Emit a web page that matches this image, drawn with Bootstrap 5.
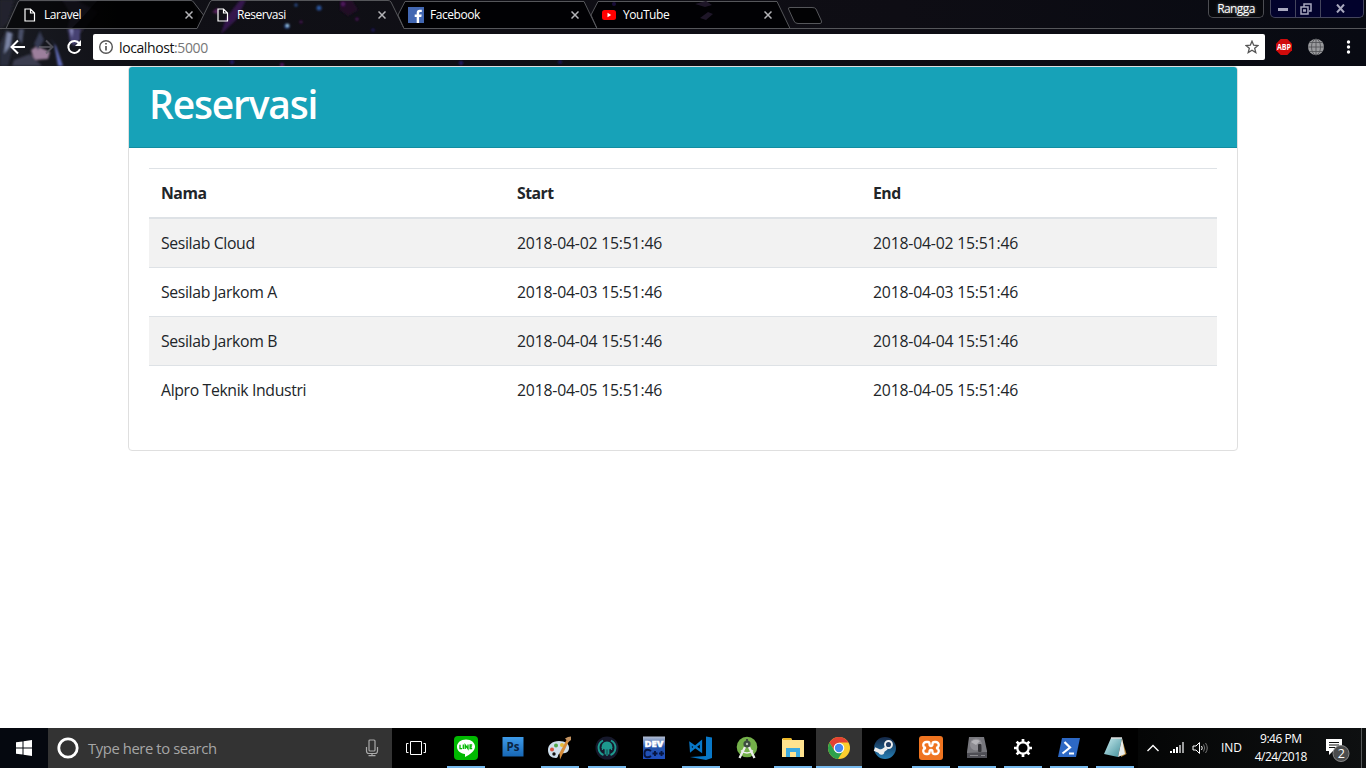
<!DOCTYPE html>
<html lang="id">
<head>
<meta charset="utf-8">
<meta name="viewport" content="width=device-width, initial-scale=1">
<title>Reservasi</title>
<link href="https://cdn.jsdelivr.net/npm/bootstrap@5.3.0/dist/css/bootstrap.min.css" rel="stylesheet">
<style>
  body { font-family: "Open Sans", "Noto Sans", sans-serif; color: #212529; background: #fff; }
  svg { display: block; flex: none; }
  .screen { width: 1366px; height: 768px; }

  /* browser frame */
  .frame { height: 66px; color: #fff; background: linear-gradient(90deg, #191b22 0, #101016 130px, #0e0d14 900px, #080a12 1366px); }
  .tabstrip { height: 29px; }
  .theme-art { left: 0; top: 0; }
  .tab-lines { left: 0; top: 0; z-index: 0; }
  .tab-item { width: 193px; padding-left: 22px; font-size: 12px; line-height: 29px; z-index: 1; letter-spacing: -.45px; }
  .tab-icon { width: 16px; margin-right: 6px; }
  .user-pill { width: 56px; height: 18px; border: 1px solid #4c4d52; border-top: 0; border-radius: 0 0 5px 5px; font-size: 12px; line-height: 18px; text-shadow: 0 0 3px #fff8; background: #07080c; letter-spacing: -.6px; }
  .win-group { width: 94px; height: 18px; margin-left: 6px; margin-right: 2px; background: #02022c; border: 1px solid #44455c; border-top: 0; border-radius: 0 0 5px 5px; }
  .win-group > div + div { border-left: 1px solid #44455c; }
  .win-min { width: 24px; }
  .win-max { width: 25px; }
  .toolbar { height: 37px; }
  .omnibox { width: 1172px; height: 26px; background: #fff; border-radius: 2px; color: #111; font-size: 14px; margin-top: 5px; letter-spacing: -.4px; }
  .port { color: #777; }
  .bookmark { margin-right: 6px; }

  /* page */
  .page { height: 662px; }
  .booking { width: 1110px; border-color: #dfdfdf; border-radius: 4px; }
  .booking-head { height: 81px; padding: 11px 20px; background: #17a2b8; border-bottom: 1px solid #138da1; border-radius: 3px 3px 0 0; }
  .booking-head h1 { font-size: 39px; font-weight: 600; line-height: 52px; color: #fff; letter-spacing: -1.2px; }
  .booking-body { padding: 20px; }
  .booking-table { font-size: 15.8px; line-height: 24px; letter-spacing: -.21px; border-collapse: separate; border-spacing: 0; table-layout: fixed; --bs-table-striped-bg: #f2f2f2; }
  .booking-table > :not(caption) > * > * { padding: 12px; border: 0 solid #dee2e6; border-top-width: 1px; }
  .booking-table > thead > tr > th { border-bottom-width: 2px; font-weight: 700; letter-spacing: -.5px; }
  .booking-table > tbody > tr:first-child > td { border-top-width: 0; }
  .booking-table > tbody > tr > td:first-child { letter-spacing: -.36px; }

  /* taskbar */
  .taskbar { height: 40px; background: #000; color: #fff; }
  .start { width: 48px; background: #05080f; }
  .search { width: 344px; background: #333; color: #a6a6a6; font-size: 14.8px; letter-spacing: -.4px; padding-left: 9px; padding-right: 12px; }
  .search-hint { margin-left: 9px; padding-top: 1px; }
  .task-view { width: 48px; }
  .apps { margin-left: 2px; }
  .app { width: 46px; height: 40px; }
  .app.wide { width: 47px; }
  .app.running { background: linear-gradient(#76b9ed, #76b9ed) 50% 100% / 38px 2px no-repeat; }
  .app.current { background: linear-gradient(#76b9ed, #76b9ed) 0 100% / 46px 2px no-repeat, #333; }
  .tray { background: linear-gradient(90deg, #050606, #0e1011); font-size: 12px; letter-spacing: -.5px; padding-left: 9px; }
  .signal { margin-left: 11px; }
  .volume { margin-left: 8px; }
  .lang { margin-left: 12px; letter-spacing: -.1px; }
  .clock { width: 66px; line-height: 18px; margin-left: 6px; }
  .notes { margin-left: 11px; }
  .peek { width: 1px; height: 40px; background: #55585a; margin-right: 4px; }
</style>
</head>
<body>
<div class="screen d-flex flex-column overflow-hidden">

  <header class="frame position-relative">
    <svg class="theme-art position-absolute" width="1366" height="66">
      <defs><filter id="soft" x="-30%" y="-30%" width="160%" height="160%"><feGaussianBlur stdDeviation="1.300"/></filter></defs>
      <g filter="url(#soft)">
        <path d="M0 0H14L8 22 0 30Z" fill="#20232d"/>
        <path d="M62 0L76 0 98 12 80 34 74 42 67 30 71 14Z" fill="#2a2638"/>
        <path d="M6 30L14 34 12 50 8 66H0V44Z" fill="#2c2f3e"/>
        <path d="M7 32L12 33 10 46 4 54Z" fill="#7a84a4"/>
        <path d="M19 29L24 29 22 44 18 38Z" fill="#4a5068"/>
        <path d="M31 50L37 46 50 52 48 59 34 60Z" fill="#9c7f9c"/>
        <path d="M34 44L40 31 44 40 38 50Z" fill="#353a52"/>
        <path d="M50 38L54 43 58 66H63L56 46Z" fill="#5e69b4"/>
        <path d="M68 29L80 29 80 40 74 46 70 42Z" fill="#474273"/>
        <path d="M70 29L73 29 72 38Z" fill="#9290c4"/>
        <path d="M14 60L30 54 42 66H12Z" fill="#3b3c50"/>
        <path d="M221 34L226 18 240 0H246L236 20Z" fill="#35184e"/>
        <path d="M212 12L218 8 218 14Z" fill="#5a2060"/>
        <path d="M340 0H352L358 10 348 16 340 10Z" fill="#231028"/>
        <g fill="#2c56a0"><circle cx="287" cy="26" r="2.600"/><circle cx="319" cy="8" r="2.500"/><circle cx="296" cy="5" r="1.500"/></g>
        <circle cx="287.500" cy="25.500" r="1.400" fill="#b2e0f4"/>
        <g fill="#571566"><circle cx="343" cy="4" r="2"/><circle cx="301" cy="22" r="1.300"/><circle cx="357" cy="19" r="1.500"/><circle cx="282" cy="65" r="2"/></g>
        <g fill="#241e6e"><circle cx="373" cy="30" r="1.500"/><circle cx="232" cy="62" r="2"/><circle cx="461" cy="63" r="2"/><circle cx="560" cy="62" r="1.700"/></g>
      </g>
    </svg>
    <svg class="tab-lines position-absolute" width="1366" height="30" fill="none" stroke="#55565a">
      <path d="M7 28.500L19 1.500H192L198 15 197 28.500Z" fill="#000" fill-opacity=".6" stroke="none"/>
      <path d="M97 1H192L203 15 197 28H72L80 20Z" fill="#000" fill-opacity=".7" stroke="none"/>
      <path d="M405 1.500H584L597 28.500H404L398 15ZM598 1.500H777L790 28.500H597L591 15Z" fill="#010104"/>
      <path d="M0 28.500H6L18 2Q19 .5 20 .5H191Q192.500 .5 193.500 2L203.500 15M6 28.500H197L210 2Q211 .5 212 .5H388Q390 .5 391 2L404 28.500H597M790 28.500H1366"/>
      <path d="M790 7.500H812Q815 7.500 816 9L821.500 21Q822 23.500 820 23.500H798Q795 23.500 794 21L788.500 9Q788 7.500 790 7.500Z" fill="#020204"/>
      <g stroke="none"><circle cx="614" cy="4" r="2" fill="#180c38"/><path d="M695 4L706 1 712 5 705 7ZM700 18L708 12 713 14 706 20Z" fill="#1e1628"/></g>
    </svg>
    <div class="tabstrip d-flex position-relative">
      <div class="tab-item d-flex align-items-center"><span class="tab-icon d-flex justify-content-center"><svg width="12" height="14" fill="none" stroke="#fff" stroke-width="1.200"><path d="M1 1H6.500L10.500 5V13H1ZM6.500 1V5H10.500"/></svg></span>Laravel<svg class="ms-auto" width="8" height="8" stroke="#b4b4b8" stroke-width="1.500"><path d="M.5 .5L7.500 7.500M7.500 .5L.5 7.500"/></svg></div>
      <div class="tab-item d-flex align-items-center"><span class="tab-icon d-flex justify-content-center"><svg width="12" height="14" fill="none" stroke="#fff" stroke-width="1.200"><path d="M1 1H6.500L10.500 5V13H1ZM6.500 1V5H10.500"/></svg></span>Reservasi<svg class="ms-auto" width="8" height="8" stroke="#b4b4b8" stroke-width="1.500"><path d="M.5 .5L7.500 7.500M7.500 .5L.5 7.500"/></svg></div>
      <div class="tab-item d-flex align-items-center"><span class="tab-icon"><svg width="16" height="16"><path d="M0 0H16V16H0Z" fill="#4267b2"/><path d="M8.700 16V10H6.700V7.500H8.700V5.700Q8.700 2.700 11.700 2.700H13.800V5H12.300Q11.100 5 11.100 6.200V7.500H13.700L13.300 10H11.100V16Z" fill="#fff"/></svg></span>Facebook<svg class="ms-auto" width="8" height="8" stroke="#b4b4b8" stroke-width="1.500"><path d="M.5 .5L7.500 7.500M7.500 .5L.5 7.500"/></svg></div>
      <div class="tab-item d-flex align-items-center"><span class="tab-icon"><svg width="16" height="12"><rect x="1" y="1" width="14" height="10" rx="2.500" fill="#f00"/><path d="M6.500 3.800L10.200 6 6.500 8.200Z" fill="#fff"/></svg></span>YouTube<svg class="ms-auto" width="8" height="8" stroke="#b4b4b8" stroke-width="1.500"><path d="M.5 .5L7.500 7.500M7.500 .5L.5 7.500"/></svg></div>
      <div class="user-pill ms-auto text-center">Rangga</div>
      <div class="win-group d-flex">
        <div class="win-min d-flex align-items-center justify-content-center"><svg width="10" height="4"><path d="M0 1H10V4H0Z" fill="#a8a8be"/></svg></div>
        <div class="win-max d-flex align-items-center justify-content-center pe-1"><svg width="12" height="12" fill="none" stroke="#a8a8be" stroke-width="1.500"><path d="M4 3.500V1H11V8H9M1 4H8V11H1ZM3.800 7H5.200V8H3.800Z"/></svg></div>
        <div class="d-flex align-items-center justify-content-center flex-fill pe-1"><svg width="9" height="9" stroke="#a8a8be" stroke-width="2"><path d="M1 .5L8 8.500M8 .5L1 8.500"/></svg></div>
      </div>
    </div>

    <div class="toolbar d-flex position-relative">
      <svg width="93" height="37" fill="none" stroke="#fff" stroke-width="2">
        <path d="M25 18H12M18 11.500L11.500 18 18 24.500"/>
        <path d="M39 18H52M46 11.500L52.500 18 46 24.500" stroke="#62626b" opacity=".7"/>
        <path d="M79.300 14.500A6 6 0 1 0 80 20"/><path d="M75 17H81V11Z" fill="#fff" stroke="none"/>
      </svg>
      <div class="omnibox d-flex align-items-center">
        <svg class="ms-1" width="18" height="18" fill="none" stroke="#555" stroke-width="1.400"><circle cx="9" cy="9" r="6.300"/><path d="M9 8V12.500M9 5V6.600" stroke-width="1.700"/></svg>
        <span class="ms-1">localhost<span class="port">:5000</span></span>
        <svg class="bookmark ms-auto" width="14" height="14" fill="none" stroke="#555" stroke-width="1.300"><path d="M7 1.200L8.700 5.200 13 5.500 9.700 8.300 10.800 12.600 7 10.300 3.200 12.600 4.300 8.300 1 5.500 5.300 5.200Z"/></svg>
      </div>
      <svg width="101" height="37">
        <path d="M15.700 10H22.300L27 14.700V21.300L22.300 26H15.700L11 21.300V14.700Z" fill="#d00b0b"/>
        <text x="12" y="20.900" font-size="8" font-weight="700" fill="#fff" textLength="14" lengthAdjust="spacingAndGlyphs">ABP</text>
        <circle cx="51" cy="18" r="8" fill="#9a9b9e"/>
        <g fill="none" stroke="#55565a" stroke-width=".9"><path d="M51 10V26M43 18H59M45 13.500H57M45 22.500H57"/><ellipse cx="51" cy="18" rx="4.500" ry="8"/></g>
        <g fill="#fff"><circle cx="83.500" cy="13" r="1.700"/><circle cx="83.500" cy="18" r="1.700"/><circle cx="83.500" cy="23" r="1.700"/></g>
      </svg>
    </div>
  </header>

  <main class="page d-flex justify-content-center align-items-start">
    <div class="card booking">
      <div class="booking-head"><h1 class="mb-0">Reservasi</h1></div>
      <div class="card-body booking-body">
        <table class="table table-striped booking-table mb-3">
          <thead><tr><th>Nama</th><th>Start</th><th>End</th></tr></thead>
          <tbody>
            <tr><td>Sesilab Cloud</td><td>2018-04-02 15:51:46</td><td>2018-04-02 15:51:46</td></tr>
            <tr><td>Sesilab Jarkom A</td><td>2018-04-03 15:51:46</td><td>2018-04-03 15:51:46</td></tr>
            <tr><td>Sesilab Jarkom B</td><td>2018-04-04 15:51:46</td><td>2018-04-04 15:51:46</td></tr>
            <tr><td>Alpro Teknik Industri</td><td>2018-04-05 15:51:46</td><td>2018-04-05 15:51:46</td></tr>
          </tbody>
        </table>
      </div>
    </div>
  </main>

  <footer class="taskbar d-flex">
    <div class="start d-flex align-items-center justify-content-center"><svg width="16" height="16" fill="#fff"><path d="M0 2.300L6.500 1.400V7.500H0ZM7.500 1.200L16 0V7.500H7.500ZM0 8.500H6.500V14.600L0 13.700ZM7.500 8.500H16V16L7.500 14.800Z"/></svg></div>
    <div class="search d-flex align-items-center">
      <svg width="22" height="22" fill="none" stroke="#fff"><circle cx="11" cy="11" r="9.200" stroke-width="2.800"/></svg>
      <span class="search-hint">Type here to search</span>
      <svg class="ms-auto" width="16" height="18" fill="none" stroke="#aaa" stroke-width="1.200"><rect x="5" y="1" width="6" height="11" rx="1"/><path d="M2.500 8V12Q2.500 14.500 5 14.500H11Q13.500 14.500 13.500 12V8M8 14.500V17M4.500 16.700H11.500"/></svg>
    </div>
    <div class="task-view d-flex align-items-center justify-content-center"><svg width="22" height="16" fill="none" stroke="#fff"><path d="M5.500 1.500H16.500V14.500H5.500ZM3.500 3.500H1.500V12.500H3.500M18.500 3.500H20.500V12.500H18.500"/></svg></div>

    <div class="apps d-flex">
      <div class="app wide running d-flex align-items-center justify-content-center"><svg width="24" height="24"><rect width="24" height="24" rx="4" fill="#00b900"/><path d="M12 3.500C6.800 3.500 3 6.700 3 10.800S6.500 17.400 11 18V21C16 18.500 21 15 21 10.800S17.200 3.500 12 3.500Z" fill="#fff"/><g stroke="#00b900" stroke-width="1.300" fill="none"><path d="M6 8.700V12.700H8M9.300 8.500V13M11.200 13V9L14 12.700V8.500M18.200 9H16.100V12.700H18.200M16.100 10.800H18"/></g></svg></div>
      <div class="app wide d-flex align-items-center justify-content-center"><svg width="22" height="22"><defs><linearGradient id="ps" x2="0" y2="1"><stop stop-color="#3e9be9"/><stop offset="1" stop-color="#1767b5"/></linearGradient></defs><path d="M.5 0H21.500V19.500H.5Z" fill="url(#ps)"/><text x="4.500" y="14" font-size="12" font-weight="700" fill="#0b2443" textLength="13" lengthAdjust="spacingAndGlyphs">Ps</text></svg></div>
      <div class="app wide running d-flex align-items-center justify-content-center"><svg width="25" height="24"><path d="M12 5C5 5 1 9 1 14S4 22 9 22C12 22 10 18 13 17.500S21 18 22 13 18 5 12 5Z" fill="#cfdfec"/><circle cx="5" cy="13.500" r="2" fill="#d9523c"/><circle cx="9" cy="9.500" r="2" fill="#52a94a"/><circle cx="15" cy="9" r="2" fill="#e4bc38"/><circle cx="7" cy="18" r="1.700" fill="#111"/><path d="M22 5L13 23.500 12.500 17 19.500 4Z" fill="#d48b3a"/><path d="M18 2.500L21 1 24 .5 24 4 21.500 6Z" fill="#c59461"/></svg></div>
      <div class="app wide running d-flex align-items-center justify-content-center"><svg width="24" height="24"><circle cx="12" cy="12" r="11.500" fill="#16182b"/><g fill="none" stroke="#1d9a8e"><path d="M8 4.500C1.500 8 2.500 16.500 8.500 19M16 4.500C22.500 8 21.500 16.500 15.500 19" stroke-width="1.900"/><path d="M7.500 11V14M16.500 11V14M10.300 18.500V12M13.700 18.500V12M12 20V12" stroke-width="1.300"/></g><path d="M6.500 12Q6.500 5.500 12 5.500T17.500 12Q15 13.500 12 13.500T6.500 12Z" fill="#1d9a8e"/></svg></div>
      <div class="app wide d-flex align-items-center justify-content-center"><svg width="24" height="24"><defs><linearGradient id="dv" x2="0" y2="1"><stop stop-color="#b5c0d4"/><stop offset=".45" stop-color="#2553a8"/><stop offset="1" stop-color="#1e4fc0"/></linearGradient></defs><path d="M1 .5H23V23H1Z" fill="url(#dv)"/><text x="2.500" y="11" font-size="9.500" font-weight="800" fill="#fff" stroke="#fff" stroke-width=".4" textLength="19" lengthAdjust="spacingAndGlyphs">DEV</text><path d="M9 15Q7.500 13.700 5.500 13.700Q2.500 13.700 2.500 17.500T5.500 21.300Q7.500 21.300 9 20M10.500 17.500H15.500M13 15V20M17 17.500H22M19.500 15V20" fill="none" stroke="#071540" stroke-width="1.900"/></svg></div>
      <div class="app wide running d-flex align-items-center justify-content-center"><svg width="24" height="24"><path d="M17 .5L23 1.500V22L17 24 1 21 17 20Z" fill="#0878c8"/><path d="M12 6L2 14.500 1.500 7.500 12 15Z" fill="none" stroke="#0878c8" stroke-width="2.300"/></svg></div>
      <div class="app d-flex align-items-center justify-content-center"><svg width="22" height="24"><circle cx="11" cy="11" r="10.300" fill="#74b04a"/><path d="M5 14.500Q11 19.500 17 14.500" fill="none" stroke="#eee" stroke-width="1.600"/><path d="M10 9L3.500 22M12 9L18.500 22" stroke="#eceeed" stroke-width="2.300"/><circle cx="11" cy="8" r="3.600" fill="#3c4b40"/><path d="M11 3V7" stroke="#3c4b40" stroke-width="2"/><circle cx="11" cy="8" r="1.200" fill="#b9c6b3"/></svg></div>
      <div class="app running d-flex align-items-center justify-content-center"><svg width="22" height="20"><path d="M1 0H9L10 2H22V19H0V1Z" fill="#ffe28e"/><path d="M1 0H9L10 2H1Z" fill="#edb929"/><path d="M4 10H18V19H14V14H8V19H4Z" fill="#3ca9df"/></svg></div>
      <div class="app current d-flex align-items-center justify-content-center"><svg width="24" height="24"><circle cx="12" cy="12" r="11" fill="#fbce2e"/><path d="M2.500 6.500A11 11 0 0 1 21.500 6.500H12L7 14Z" fill="#e34133"/><path d="M2.500 6.500A11 11 0 0 0 11 23L16.500 14.500H7.300Z" fill="#2da14c"/><circle cx="12" cy="12" r="5.300" fill="#fff"/><circle cx="12" cy="12" r="4.200" fill="#4688f1"/></svg></div>
      <div class="app d-flex align-items-center justify-content-center"><svg width="24" height="24"><defs><linearGradient id="st" x2="0" y2="1"><stop stop-color="#142746"/><stop offset="1" stop-color="#267fb5"/></linearGradient></defs><circle cx="12" cy="12" r="11" fill="url(#st)"/><path d="M1.500 13L8 16 13.500 12" stroke="#eee" stroke-width="3.600" fill="none"/><circle cx="15.500" cy="8.500" r="3.500" fill="#233f65" stroke="#f0f0f0" stroke-width="1.900"/><circle cx="8.500" cy="16" r="2.800" fill="#eee"/></svg></div>
      <div class="app running d-flex align-items-center justify-content-center"><svg width="24" height="24"><rect width="24" height="24" rx="3" fill="#ef7420"/><path d="M9 6H7.500A3 3 0 0 0 7 12A3 3 0 0 0 7.500 18H8.500Q10.500 18 10.500 16Q10.500 14 12 14T13.500 16Q13.500 18 15.500 18H16.500A3 3 0 0 0 17 12A3 3 0 0 0 16.500 6H15.500Q13.500 6 13.500 8Q13.500 10 12 10T10.500 8Q10.500 6 9 6Z" fill="none" stroke="#fff" stroke-width="2.300"/></svg></div>
      <div class="app running d-flex align-items-center justify-content-center"><svg width="24" height="24"><path d="M4 1H19L22 15V22H2V16Z" fill="#77777d"/><path d="M2 17L22 16V22H2Z" fill="#4e4e55"/><ellipse cx="11" cy="8.500" rx="6" ry="6" fill="#8f8e94"/><path d="M6 6Q10 2 15 5L11 9Z" fill="#b4b3b8"/><rect x="13" y="8" width="3.500" height="8" rx="1" fill="#343439"/><path d="M5 19.500H13M16 19.500H20" stroke="#8a8a8f"/></svg></div>
      <div class="app running d-flex align-items-center justify-content-center"><svg width="20" height="20" fill="none" stroke="#fff"><circle cx="10" cy="10" r="5.700" stroke-width="2.300"/><path d="M10 1V4M10 16V19M1 10H4M16 10H19M3.600 3.600L5.800 5.800M14.200 14.200L16.400 16.400M3.600 16.400L5.800 14.200M14.200 5.800L16.400 3.600" stroke-width="2.700"/></svg></div>
      <div class="app running d-flex align-items-center justify-content-center"><svg width="24" height="20"><path d="M5 0H23L19 19H1Z" fill="#2d68c4"/><path d="M7.500 4L13 9.500 5.500 15.500M12 15.500H17" fill="none" stroke="#fff" stroke-width="2.200"/></svg></div>
      <div class="app running d-flex align-items-center justify-content-center"><svg width="24" height="24"><defs><linearGradient id="np" x2="1" y2="1"><stop stop-color="#cbeef1"/><stop offset="1" stop-color="#408d99"/></linearGradient></defs><path d="M19 3L23.500 18 18 21Z" fill="#b58738"/><path d="M8 2H19L15 21 1 18Z" fill="url(#np)"/><path d="M19 2L22 18 15 21Z" fill="#e9edec"/><path d="M8 2H19" stroke="#ddd" stroke-width="1.500"/></svg></div>
    </div>

    <div class="tray d-flex align-items-center flex-fill">
      <svg width="12" height="8" fill="none" stroke="#fff" stroke-width="1.400"><path d="M.5 7L6 1.500 11.500 7"/></svg>
      <svg class="signal" width="14" height="12"><path d="M0 9H2V11H0ZM3 7H5V11H3ZM6 5H8V11H6Z" fill="#fff"/><path d="M9 3H11V11H9ZM12 0H14V11H12Z" fill="#9b9c9d"/></svg>
      <svg class="volume" width="17" height="14" fill="none" stroke="#fff"><path d="M1 5H4L7.500 1.500V12.500L4 9H1ZM9.500 5Q11 7 9.500 9"/><path d="M11.500 3.500Q14 7 11.500 10.500M13.500 2Q17 7 13.500 12" stroke="#777"/></svg>
      <span class="lang">IND</span>
      <div class="clock text-center">9:46 PM<br>4/24/2018</div>
      <svg class="notes" width="28" height="30"><path d="M1 6H17V18H8L4 22V18H1Z" fill="#fff"/><path d="M4 9.500H14M4 12H14M4 14.500H10" stroke="#111"/><circle cx="16" cy="20.500" r="8" fill="#4b4c4d" stroke="#888"/><text x="12.700" y="25" font-size="12.500" fill="#fff">2</text></svg>
      <div class="peek ms-auto"></div>
    </div>
  </footer>
</div>
<script src="https://cdn.jsdelivr.net/npm/bootstrap@5.3.0/dist/js/bootstrap.bundle.min.js"></script>
</body>
</html>
